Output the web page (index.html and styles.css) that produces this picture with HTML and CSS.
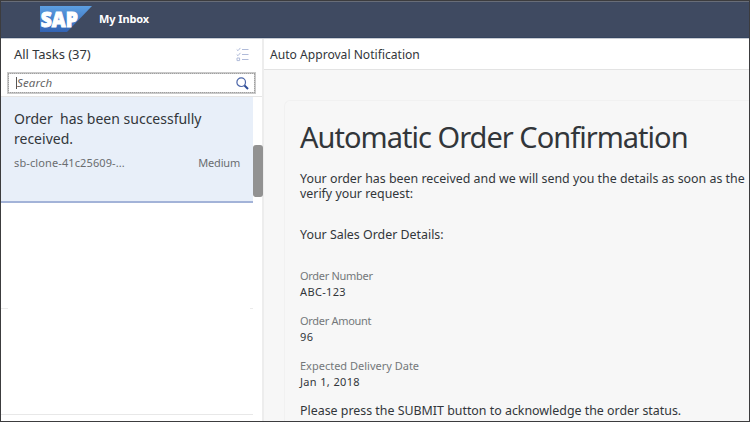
FILE: index.html
```html
<!DOCTYPE html>
<html lang="en">
<head>
<meta charset="utf-8">
<title>My Inbox</title>
<link rel="stylesheet" href="styles.css">
</head>
<body>
<div class="app">
  <header class="shell">
    <svg class="logo" width="52" height="26" viewBox="0 0 52 26" role="img" aria-label="SAP">
      <defs>
        <linearGradient id="blue" x1="0" y1="0" x2="0" y2="1">
          <stop offset="0" stop-color="#5c9fe2"/>
          <stop offset="1" stop-color="#3263b4"/>
        </linearGradient>
      </defs>
      <path d="M0 0H52L27 26H0Z" fill="url(#blue)"/>
      <text class="logo-text" x="0.8" y="20.8" textLength="37" lengthAdjust="spacingAndGlyphs">SAP</text>
    </svg>
    <h1 class="shell-title">My Inbox</h1>
  </header>
  <div class="columns">
    <aside class="master">
      <div class="master-head">
        <h2 class="list-title">All Tasks (37)</h2>
        <svg class="select-icon" width="13" height="15" viewBox="0 0 13 15">
          <path d="M.7 2.5L2 3.7 4.4.9M.7 7.5L2 8.7 4.4 5.9M1 11h2.6v2.6H1zM6 2.5h6.5M6 7.5h6.5M6 12.5h6.5"/>
        </svg>
      </div>
      <div class="search">
        <span class="caret"></span>
        <span class="placeholder">Search</span>
        <svg class="search-icon" width="13" height="13" viewBox="0 0 13 13">
          <circle cx="5.2" cy="5.2" r="4.3"/>
          <path d="M8.5 8.5L12 12"/>
        </svg>
      </div>
      <div class="list">
        <article class="task">
          <p class="task-title">Order&nbsp; has been successfully received.</p>
          <div class="task-meta"><span class="task-id">sb-clone-41c25609-...</span><span class="task-priority">Medium</span></div>
        </article>
        <div class="row-gap"><span class="tick"></span><span class="tick short"></span></div>
        <div class="row-empty"></div>
        <span class="thumb"></span>
      </div>
    </aside>
    <main class="detail">
      <div class="detail-head">Auto Approval Notification</div>
      <div class="detail-body">
        <section class="form">
          <h2 class="form-title">Automatic Order Confirmation</h2>
          <p class="text intro">Your order has been received and we will send you the details as soon as the<br>verify your request:</p>
          <p class="text section">Your Sales Order Details:</p>
          <dl class="fields">
            <div class="field"><dt>Order Number</dt><dd>ABC-123</dd></div>
            <div class="field"><dt>Order Amount</dt><dd>96</dd></div>
            <div class="field"><dt class="wide">Expected Delivery Date</dt><dd>Jan 1, 2018</dd></div>
          </dl>
          <p class="text">Please press the SUBMIT button to acknowledge the order status.</p>
        </section>
      </div>
    </main>
  </div>
</div>
</body>
</html>
```
FILE: styles.css
```css
* { box-sizing: border-box; }
body, h1, h2, p, dl, dd { margin: 0; font-weight: normal; }
body {
  background: #fff;
  font-family: "Noto Sans", sans-serif;
  color: #32363a;
  overflow: hidden;
}
.app {
  width: 750px;
  height: 422px;
  border: 1px solid #3c3c3e;
  display: flex;
  flex-direction: column;
  overflow: hidden;
}
.shell {
  height: 37px;
  flex: none;
  display: flex;
  align-items: center;
  gap: 7px;
  padding: 0 0 1px 39px;
  background: #3f4a61;
  border-top: 1px solid #686d78;
  border-bottom: 1px solid #34445f;
}
.logo { overflow: visible; }
.logo-text { font: 900 21px "Open Sans", sans-serif; fill: #fff; stroke: #fff; stroke-width: 1; }
.shell-title { font-size: 11px; font-weight: 700; color: #fff; line-height: 16px; letter-spacing: -0.1px; }
.columns { flex: 1; display: flex; min-height: 0; border-top: 1px solid #c8ccd3; }
.master { width: 263px; flex: none; border-right: 2px solid #ededed; background: #fff; }
.master-head {
  height: 33px;
  display: flex;
  align-items: center;
  justify-content: space-between;
  padding: 0 13px 3px;
}
.list-title { font-size: 13px; line-height: 18px; letter-spacing: -0.05px; }
.select-icon path { fill: none; stroke: #b0bbd9; stroke-width: 1; }
.search {
  height: 22px;
  margin: 0 6px;
  border: 2px solid #c9c9c9;
  outline: 1px dotted #a0a0a0;
  outline-offset: -2px;
  display: flex;
  align-items: center;
  padding: 0 5px 0 7px;
}
.caret { width: 1px; height: 12px; background: #555; }
.placeholder { flex: 1; font-size: 11.5px; font-style: italic; color: #666; line-height: 16px; letter-spacing: 0.15px; }
.search-icon { fill: none; stroke: #4b65a8; stroke-width: 1.2; }
.search-icon path { stroke: #2d4b96; stroke-width: 2; }
.list { position: relative; margin-top: 2px; height: 325px; border-top: 1px solid #e5e5e5; }
.task {
  width: 252px;
  height: 106px;
  padding: 12px 13px 0;
  background: #e8eff9;
  border-bottom: 2px solid #a3b3d8;
}
.task-title { font-size: 14px; line-height: 20px; }
.task-meta { display: flex; justify-content: space-between; margin-top: 6px; font-size: 11px; line-height: 16px; color: #6a6d70; }
.task-id { letter-spacing: 0.11px; }
.task-priority { letter-spacing: -0.2px; }
.row-gap { width: 252px; height: 106px; display: flex; justify-content: space-between; align-items: flex-end; }
.tick { width: 7px; height: 1px; background: #ebebeb; }
.short { width: 3px; }
.row-empty { width: 252px; height: 106px; border-bottom: 1px solid #e8e8e8; }
.thumb { position: absolute; left: 252px; top: 48px; width: 10px; height: 52px; border-radius: 3px; background: #929292; }
.detail { flex: 1; min-width: 0; background: #f7f7f7; }
.detail-head {
  height: 31px;
  padding-left: 6px;
  background: #fff;
  border-bottom: 1px solid #e3e3e3;
  font-size: 12.1px;
  line-height: 31px;
}
.detail-body { padding: 30px 0 0 20px; }
.form { height: 340px; border: 1px solid #f1f1f1; border-right: 0; border-radius: 6px 0 0 0; padding: 16px 0 0 15px; white-space: nowrap; }
.form-title { font-size: 29px; line-height: 40px; letter-spacing: -0.98px; }
.text { font-size: 12.4px; line-height: 15px; }
.intro { margin-top: 14px; }
.section { margin-top: 26px; }
.fields { margin-top: 26px; }
.field { margin-bottom: 13px; font-size: 11px; line-height: 16px; }
.field dt { color: #74777a; letter-spacing: -0.3px; }
.field dt.wide { letter-spacing: 0; }
.field dd { letter-spacing: 0.35px; }
```
